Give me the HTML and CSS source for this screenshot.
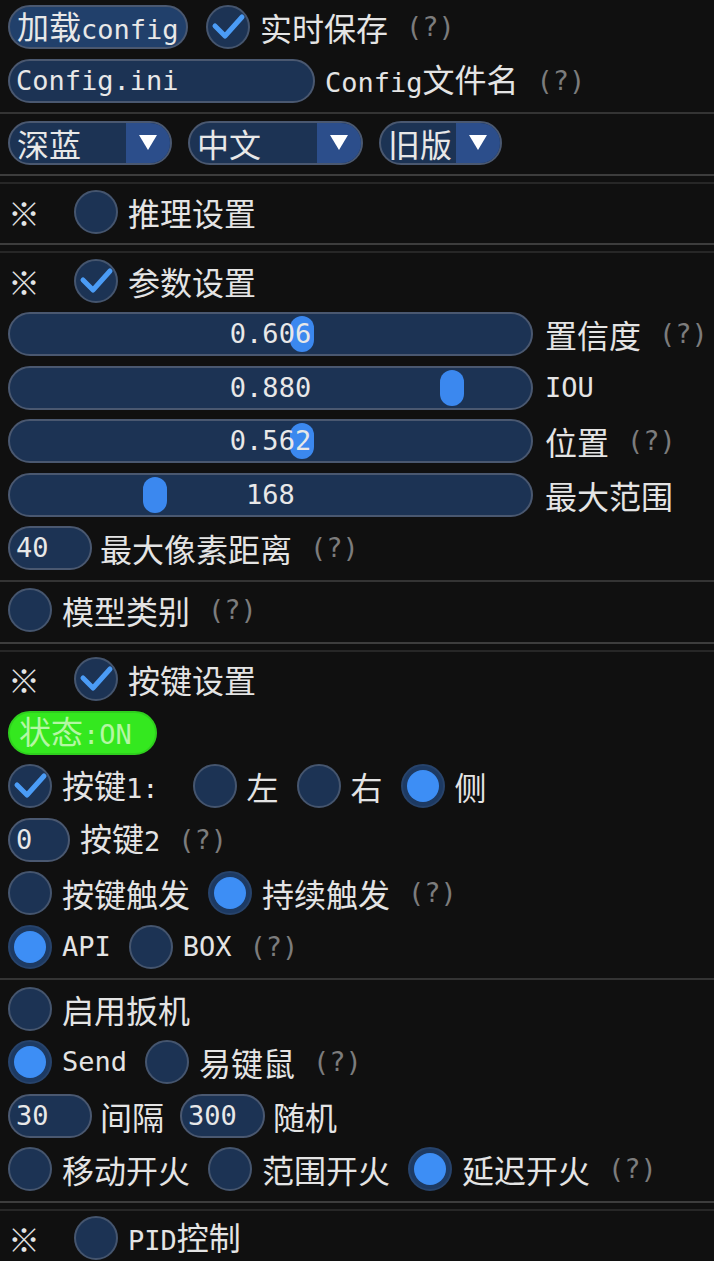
FILE: index.html
```html
<!DOCTYPE html>
<html lang="zh-CN">
<head>
<meta charset="utf-8">
<title>设置</title>
<link rel="stylesheet" href="styles.css">
</head>
<body>
<main class="panel">
  <div class="row">
    <button class="frame btn w180"><span class="lbl">加载<span class="en">config</span></span></button>
    <span class="opt">
      <span class="check"><svg viewBox="0 0 40 40"><polyline points="7,19 17,29 34,10"/></svg></span>
      <span class="lbl">实时保存</span>
    </span>
    <span class="help en">(?)</span>
  </div>
  <div class="row">
    <span class="field">
      <span class="frame input w307"><span class="en">Config.ini</span></span>
      <span class="lbl"><span class="en">Config</span>文件名</span>
    </span>
    <span class="help en">(?)</span>
  </div>
  <hr class="sep">
  <div class="row combos">
    <span class="frame combo w164"><span class="lbl">深蓝</span><span class="arrow"><svg viewBox="0 0 18 15"><polygon points="0,0 18,0 9,15"/></svg></span></span>
    <span class="frame combo w175"><span class="lbl">中文</span><span class="arrow"><svg viewBox="0 0 18 15"><polygon points="0,0 18,0 9,15"/></svg></span></span>
    <span class="frame combo w123"><span class="lbl">旧版</span><span class="arrow"><svg viewBox="0 0 18 15"><polygon points="0,0 18,0 9,15"/></svg></span></span>
  </div>
  <hr class="sep2">
  <div class="row">
    <span class="mark">※</span>
    <span class="opt"><span class="radio"></span><span class="lbl">推理设置</span></span>
  </div>
  <hr class="sep2">
  <div class="row">
    <span class="mark">※</span>
    <span class="opt">
      <span class="check"><svg viewBox="0 0 40 40"><polyline points="7,19 17,29 34,10"/></svg></span>
      <span class="lbl">参数设置</span>
    </span>
  </div>
  <div class="row">
    <span class="field slider-field">
      <span class="frame slider"><span class="grab" style="left:280px"></span><span class="val en">0.606</span></span>
      <span class="lbl">置信度</span>
    </span>
    <span class="help en">(?)</span>
  </div>
  <div class="row">
    <span class="field slider-field">
      <span class="frame slider"><span class="grab" style="left:430px"></span><span class="val en">0.880</span></span>
      <span class="lbl en">IOU</span>
    </span>
  </div>
  <div class="row">
    <span class="field slider-field">
      <span class="frame slider"><span class="grab" style="left:280px"></span><span class="val en">0.562</span></span>
      <span class="lbl">位置</span>
    </span>
    <span class="help en">(?)</span>
  </div>
  <div class="row">
    <span class="field slider-field">
      <span class="frame slider"><span class="grab" style="left:133px"></span><span class="val en">168</span></span>
      <span class="lbl">最大范围</span>
    </span>
  </div>
  <div class="row">
    <span class="field tight">
      <span class="frame input w84"><span class="en">40</span></span>
      <span class="lbl">最大像素距离</span>
    </span>
    <span class="help en">(?)</span>
  </div>
  <hr class="sep">
  <div class="row">
    <span class="opt"><span class="radio"></span><span class="lbl">模型类别</span></span>
    <span class="help en">(?)</span>
  </div>
  <hr class="sep2">
  <div class="row">
    <span class="mark">※</span>
    <span class="opt">
      <span class="check"><svg viewBox="0 0 40 40"><polyline points="7,19 17,29 34,10"/></svg></span>
      <span class="lbl">按键设置</span>
    </span>
  </div>
  <div class="row">
    <button class="frame btn state"><span class="lbl">状态<span class="en">:ON</span></span></button>
  </div>
  <div class="row">
    <span class="opt">
      <span class="check"><svg viewBox="0 0 40 40"><polyline points="7,19 17,29 34,10"/></svg></span>
      <span class="lbl trail">按键<span class="en">1:</span></span>
    </span>
    <span class="opt"><span class="radio"></span><span class="lbl">左</span></span>
    <span class="opt"><span class="radio"></span><span class="lbl">右</span></span>
    <span class="opt"><span class="radio on"></span><span class="lbl">侧</span></span>
  </div>
  <div class="row">
    <span class="field">
      <span class="frame input w62"><span class="en">0</span></span>
      <span class="lbl">按键<span class="en">2</span></span>
    </span>
    <span class="help en">(?)</span>
  </div>
  <div class="row">
    <span class="opt"><span class="radio"></span><span class="lbl">按键触发</span></span>
    <span class="opt"><span class="radio on"></span><span class="lbl">持续触发</span></span>
    <span class="help en">(?)</span>
  </div>
  <div class="row">
    <span class="opt"><span class="radio on"></span><span class="lbl en">API</span></span>
    <span class="opt"><span class="radio"></span><span class="lbl en">BOX</span></span>
    <span class="help en">(?)</span>
  </div>
  <hr class="sep">
  <div class="row">
    <span class="opt"><span class="radio"></span><span class="lbl">启用扳机</span></span>
  </div>
  <div class="row">
    <span class="opt"><span class="radio on"></span><span class="lbl en">Send</span></span>
    <span class="opt"><span class="radio"></span><span class="lbl">易键鼠</span></span>
    <span class="help en">(?)</span>
  </div>
  <div class="row pair">
    <span class="field tight">
      <span class="frame input w84"><span class="en">30</span></span>
      <span class="lbl">间隔</span>
    </span>
    <span class="field tight">
      <span class="frame input w85"><span class="en">300</span></span>
      <span class="lbl">随机</span>
    </span>
  </div>
  <div class="row">
    <span class="opt"><span class="radio"></span><span class="lbl">移动开火</span></span>
    <span class="opt"><span class="radio"></span><span class="lbl">范围开火</span></span>
    <span class="opt"><span class="radio on"></span><span class="lbl">延迟开火</span></span>
    <span class="help en">(?)</span>
  </div>
  <hr class="sep2">
  <div class="row">
    <span class="mark">※</span>
    <span class="opt"><span class="radio"></span><span class="lbl"><span class="en">PID</span>控制</span></span>
  </div>
</main>
</body>
</html>
```

FILE: styles.css
```css
html {
  overflow: hidden;
}

body {
  margin: 0;
  background: #101010;
  color: #e4e4e4;
  font-family: "Noto Sans CJK SC", "Noto Sans", sans-serif;
  font-size: 32px;
}

.panel {
  display: flex;
  flex-direction: column;
  padding: 5px 0 0 8px;
}

/* one widget line */
.row {
  display: flex;
  align-items: center;
  gap: 18px;
  height: 44px;
  line-height: 44px;
  margin-bottom: 9.5px;
  white-space: nowrap;
}

.row.combos {
  gap: 16px;
}

.row.pair {
  gap: 16px;
}

/* latin runs use a half-width monospace face */
.en {
  font-family: "DejaVu Sans Mono", monospace;
  font-size: 27px;
}

.lbl {
  display: inline-block;
}

.lbl.trail {
  margin-right: 16px;
}

.help {
  color: #7c7c7c;
}

.field,
.opt {
  display: flex;
  align-items: center;
  gap: 10px;
}

.field.tight {
  gap: 8px;
}

.slider-field {
  gap: 12px;
}

.mark {
  width: 48px;
  flex: none;
}

/* framed widgets: buttons, inputs, combos, sliders */
.frame {
  box-sizing: border-box;
  height: 44px;
  border: 2px solid #4a5870;
  border-radius: 22px;
  background: #1c3354;
  color: #e8e8e8;
  display: flex;
  align-items: center;
  flex: none;
}

.btn {
  font: inherit;
  line-height: 44px;
  padding: 0 0 0 7px;
  margin: 0;
  background: #21406b;
  cursor: pointer;
}

.btn.state {
  width: 149px;
  background: #34e81f;
  border-color: #2fcf1e;
  color: #b4f7a4;
  padding-left: 9px;
}

.input {
  padding-left: 6px;
}

.w62 { width: 62px; }
.w84 { width: 84px; }
.w85 { width: 85px; }
.w123 { width: 123px; }
.w164 { width: 164px; }
.w175 { width: 175px; }
.w180 { width: 180px; }
.w307 { width: 307px; }

.combo {
  overflow: hidden;
  justify-content: space-between;
  padding-left: 7px;
}

.combo .arrow {
  width: 44px;
  height: 100%;
  background: #2c4e8b;
  display: flex;
  align-items: center;
  justify-content: center;
}

.combo .arrow svg {
  width: 18px;
  height: 15px;
  fill: #ffffff;
}

.slider {
  position: relative;
  width: 525px;
  justify-content: center;
}

.grab {
  position: absolute;
  top: 2px;
  width: 24px;
  height: 36px;
  border-radius: 12px;
  background: #3b88ef;
}

.val {
  position: relative;
}

/* round check boxes and radio buttons */
.check,
.radio {
  box-sizing: border-box;
  width: 44px;
  height: 44px;
  border-radius: 50%;
  border: 2px solid #45556e;
  background: #1c3354;
  display: flex;
  align-items: center;
  justify-content: center;
  flex: none;
}

.check svg {
  width: 40px;
  height: 40px;
  fill: none;
  stroke: #4b9cf6;
  stroke-width: 5;
  stroke-linecap: round;
  stroke-linejoin: round;
}

.radio.on {
  border-color: #27436b;
  background: #1d3a63;
}

.radio.on::after {
  content: "";
  width: 32px;
  height: 32px;
  border-radius: 50%;
  background: #3d8ef5;
}

/* separators */
.sep,
.sep2 {
  border: 0;
  padding: 0;
  margin: 0 0 0 -8px;
  box-sizing: border-box;
}

.sep {
  height: 2px;
  background: #343434;
  margin-bottom: 6.5px;
}

.sep2 {
  height: 10px;
  border-top: 2px solid #3d3d3d;
  border-bottom: 2px solid #272727;
  margin-bottom: 5.5px;
}
```
